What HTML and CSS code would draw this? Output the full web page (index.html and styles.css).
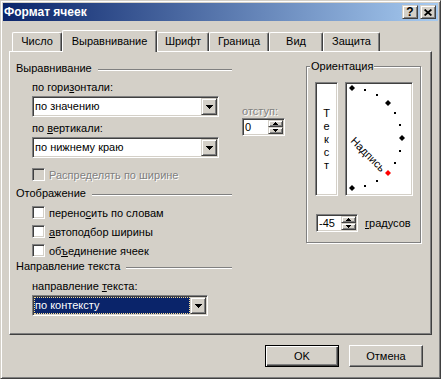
FILE: index.html
```html
<!DOCTYPE html>
<html lang="ru">
<head>
    <meta charset="UTF-8">
    <title>Формат ячеек</title>
    <link rel="stylesheet" href="styles.css">
</head>
<body>
    <div class="window">
        <div class="titlebar">
            <span class="title">Формат ячеек</span>
            <div class="caption-buttons">
                <span class="cap-btn">?</span>
                <span class="cap-btn">
                    <svg width="8" height="7" viewBox="0 0 8 7"><path d="M0.6 0.5L7.4 6.5M7.4 0.5L0.6 6.5" stroke="#000" stroke-width="1.7"/></svg>
                </span>
            </div>
        </div>

        <!-- Tabs -->
        <div class="tabs">
            <div class="tab tab-number">Число</div>
            <div class="tab tab-align active">Выравнивание</div>
            <div class="tab tab-font">Шрифт</div>
            <div class="tab tab-border">Граница</div>
            <div class="tab tab-view">Вид</div>
            <div class="tab tab-protect">Защита</div>
        </div>

        <div class="panel">
            <!-- Left column -->
            <div class="col-main">
                <div class="group-head">
                    <span>Выравнивание</span><span class="rule"></span>
                </div>
                <div class="indent">
                    <div class="field-label first">по гори<u>з</u>онтали:</div>
                    <div class="combo">
                        <span class="combo-value">по значению</span>
                        <span class="drop-btn"><svg width="7" height="4" viewBox="0 0 7 4"><path d="M0 0h7v1h-1v1h-1v1h-1v1h-1v-1h-1v-1h-1v-1h-1z"/></svg></span>
                    </div>
                    <div class="field-label">по <u>в</u>ертикали:</div>
                    <div class="combo">
                        <span class="combo-value">по нижнему краю</span>
                        <span class="drop-btn"><svg width="7" height="4" viewBox="0 0 7 4"><path d="M0 0h7v1h-1v1h-1v1h-1v1h-1v-1h-1v-1h-1v-1h-1z"/></svg></span>
                    </div>
                    <div class="check-row spread disabled">
                        <span class="check off"></span>
                        <span>Распределять по ширине</span>
                    </div>
                </div>

                <div class="group-head display-head">
                    <span>Отображение</span><span class="rule"></span>
                </div>
                <div class="indent">
                    <div class="check-row">
                        <span class="check"></span>
                        <span>перено<u>с</u>ить по словам</span>
                    </div>
                    <div class="check-row">
                        <span class="check"></span>
                        <span><u>а</u>втоподбор ширины</span>
                    </div>
                    <div class="check-row">
                        <span class="check"></span>
                        <span>об<u>ъ</u>единение ячеек</span>
                    </div>
                </div>

                <div class="group-head direction-head">
                    <span>Направление текста</span><span class="rule"></span>
                </div>
                <div class="indent">
                    <div class="field-label direction-label">направление <u>т</u>екста:</div>
                    <div class="combo short">
                        <span class="combo-value selected">по контексту</span>
                        <span class="drop-btn"><svg width="7" height="4" viewBox="0 0 7 4"><path d="M0 0h7v1h-1v1h-1v1h-1v1h-1v-1h-1v-1h-1v-1h-1z"/></svg></span>
                    </div>
                </div>
            </div>

            <!-- Indent -->
            <div class="col-indent">
                <div class="field-label disabled">отступ:</div>
                <div class="spin">
                    <span class="spin-value">0</span>
                    <span class="spin-btns">
                        <span class="spin-btn"><svg width="5" height="3" viewBox="0 0 5 3"><path d="M2 0h1v1h1v1h1v1h-5v-1h1v-1h1z"/></svg></span>
                        <span class="spin-btn"><svg width="5" height="3" viewBox="0 0 5 3"><path d="M0 0h5v1h-1v1h-1v1h-1v-1h-1v-1h-1z"/></svg></span>
                    </span>
                </div>
            </div>

            <!-- Orientation -->
            <div class="orientation">
                <span class="orientation-title">Ориентация</span>
                <div class="orient-row">
                    <div class="text-box">
                        <span>Т</span><span>е</span><span>к</span><span>с</span><span>т</span>
                    </div>
                    <div class="dial">
                        <svg width="64" height="110" viewBox="0 0 64 110">
                            <g fill="#000">
                                <polygon points="5,1 8,4 5,7 2,4"/>
                                <polygon points="41,16 44,19 41,22 38,19"/>
                                <polygon points="55,51 58,54 55,57 52,54"/>
                                <polygon points="5,101 8,104 5,107 2,104"/>
                                <rect x="17" y="5" width="2" height="2"/>
                                <rect x="29" y="10" width="2" height="2"/>
                                <rect x="47" y="28" width="2" height="2"/>
                                <rect x="52" y="40" width="2" height="2"/>
                                <rect x="52" y="66" width="2" height="2"/>
                                <rect x="47" y="78" width="2" height="2"/>
                                <rect x="29" y="96" width="2" height="2"/>
                                <rect x="17" y="101" width="2" height="2"/>
                            </g>
                            <polygon points="41,86 44,89 41,92 38,89" fill="#ff0000"/>
                            <text x="6" y="58" transform="rotate(45 5 54)" font-size="11">Надпись</text>
                        </svg>
                    </div>
                </div>
                <div class="degrees">
                    <div class="spin wide">
                        <span class="spin-value">-45</span>
                        <span class="spin-btns">
                            <span class="spin-btn"><svg width="5" height="3" viewBox="0 0 5 3"><path d="M2 0h1v1h1v1h1v1h-5v-1h1v-1h1z"/></svg></span>
                            <span class="spin-btn"><svg width="5" height="3" viewBox="0 0 5 3"><path d="M0 0h5v1h-1v1h-1v1h-1v-1h-1v-1h-1z"/></svg></span>
                        </span>
                    </div>
                    <span><u>г</u>радусов</span>
                </div>
            </div>
        </div>

        <div class="buttons">
            <button class="btn default">OK</button>
            <button class="btn">Отмена</button>
        </div>
    </div>
</body>
</html>
```

FILE: styles.css
```css
* {
    box-sizing: border-box;
}

body {
    margin: 0;
    background: #d4d0c8;
    font-family: 'Liberation Sans', Arial, sans-serif;
    font-size: 11px;
    color: #000;
}

u {
    text-underline-offset: 1px;
}

.window {
    width: 441px;
    height: 379px;
    padding: 2px;
    border: 1px solid;
    border-color: #d4d0c8 #404040 #404040 #d4d0c8;
    box-shadow: inset 1px 1px #fff, inset -1px -1px #808080;
}

/* Title bar */
.titlebar {
    height: 18px;
    display: flex;
    align-items: center;
    justify-content: space-between;
    padding: 0 2px 0 1px;
    background: linear-gradient(to right, #0a246a, #a6caf0);
}

.title {
    color: #fff;
    font-weight: bold;
    font-size: 12px;
}

.caption-buttons {
    display: flex;
    gap: 2px;
}

.cap-btn {
    width: 16px;
    height: 14px;
    display: flex;
    align-items: center;
    justify-content: center;
    background: #d4d0c8;
    border: 1px solid;
    border-color: #d4d0c8 #404040 #404040 #d4d0c8;
    box-shadow: inset 1px 1px #fff, inset -1px -1px #808080;
    font-weight: bold;
    font-size: 12px;
    line-height: 1;
}

.cap-btn svg {
    display: block;
}

/* Tabs */
.tabs {
    display: flex;
    align-items: flex-end;
    height: 21px;
    margin-top: 9px;
    padding-left: 9px;
}

.tab {
    height: 19px;
    line-height: 17px;
    text-align: center;
    border-top: 1px solid #fff;
    border-left: 1px solid #fff;
    border-right: 1px solid #404040;
    border-radius: 2px 2px 0 0;
    box-shadow: inset -1px 0 #808080;
}

.tab.active {
    height: 22px;
    line-height: 20px;
    margin-bottom: -1px;
    position: relative;
    z-index: 1;
    background: #d4d0c8;
}

.tab-number { width: 50px; }
.tab-align { width: 95px; }
.tab-font { width: 52px; }
.tab-border { width: 60px; }
.tab-view { width: 54px; }
.tab-protect { width: 57px; }

/* Panel */
.panel {
    display: flex;
    width: 423px;
    height: 284px;
    margin-left: 6px;
    padding: 10px 0 0 6px;
    border: 1px solid;
    border-color: #fff #404040 #404040 #fff;
    box-shadow: inset -1px -1px #808080;
}

.col-main {
    width: 216px;
}

.group-head {
    display: flex;
    align-items: center;
    gap: 6px;
    height: 13px;
    line-height: 13px;
}

.group-head .rule {
    flex: 1;
    height: 2px;
    margin-top: 2px;
    border-top: 1px solid #808080;
    border-bottom: 1px solid #fff;
}

.display-head { margin-top: 6px; }
.direction-head { margin-top: 3px; }

.indent {
    padding-left: 16px;
}

.field-label {
    height: 13px;
    line-height: 13px;
    margin-top: 5px;
}

.field-label.first { margin-top: 6px; }
.field-label.direction-label { margin-top: 7px; }

.disabled {
    color: #808080;
    text-shadow: 1px 1px 0 #fff;
}

/* Sunken fields */
.combo,
.spin,
.check,
.text-box,
.dial {
    background: #fff;
    border: 1px solid;
    border-color: #808080 #fff #fff #808080;
    box-shadow: inset 1px 1px #404040, inset -1px -1px #d4d0c8;
}

.combo {
    display: flex;
    width: 187px;
    height: 21px;
    margin-top: 2px;
    padding: 1px;
}

.combo.short {
    width: 176px;
}

.combo-value {
    flex: 1;
    padding-left: 1px;
    line-height: 17px;
    white-space: nowrap;
}

.combo-value.selected {
    background: #0a246a;
    color: #fff;
    outline: 1px dotted #f5db95;
    outline-offset: -1px;
}

.drop-btn,
.spin-btn {
    display: flex;
    align-items: center;
    justify-content: center;
    background: #d4d0c8;
    border: 1px solid;
    border-color: #d4d0c8 #404040 #404040 #d4d0c8;
    box-shadow: inset 1px 1px #fff, inset -1px -1px #808080;
}

.drop-btn {
    width: 16px;
    height: 17px;
}

.drop-btn svg,
.spin-btn svg {
    display: block;
}

.check-row {
    display: flex;
    align-items: center;
    gap: 4px;
    height: 13px;
    margin-top: 6px;
}

.check-row.spread {
    margin-top: 10px;
}

.check {
    width: 13px;
    height: 13px;
}

.check.off {
    background: #d4d0c8;
}

/* Indent column */
.col-indent {
    width: 43px;
    margin-left: 10px;
    padding-top: 38px;
}

.spin {
    display: flex;
    width: 43px;
    height: 18px;
    padding: 1px;
    text-shadow: none;
    color: #000;
}

.spin.wide {
    width: 42px;
}

.spin-value {
    flex: 1;
    padding-left: 1px;
    line-height: 14px;
}

.spin-btns {
    display: flex;
    flex-direction: column;
    width: 15px;
}

.spin-btn {
    height: 7px;
}

/* Orientation */
.orientation {
    position: relative;
    width: 115px;
    height: 177px;
    margin: 4px 0 0 21px;
    padding: 15px 0 0 8px;
    border: 1px solid #808080;
    box-shadow: inset 1px 1px #fff, 1px 1px #fff;
}

.orientation-title {
    position: absolute;
    top: -7px;
    left: 3px;
    padding: 0 1px;
    line-height: 13px;
    background: #d4d0c8;
}

.orient-row {
    display: flex;
    gap: 7px;
}

.text-box {
    width: 23px;
    height: 114px;
    display: flex;
    flex-direction: column;
    align-items: center;
    justify-content: center;
}

.text-box span {
    line-height: 13px;
}

.dial {
    width: 68px;
    height: 114px;
    padding: 1px;
}

.dial svg {
    display: block;
}

.degrees {
    display: flex;
    align-items: center;
    gap: 7px;
    margin: 18px 0 0 1px;
}

/* Dialog buttons */
.buttons {
    display: flex;
    justify-content: flex-end;
    gap: 10px;
    margin-top: 10px;
    padding-right: 15px;
}

.btn {
    width: 74px;
    height: 22px;
    padding: 0;
    font: inherit;
    color: #000;
    background: #d4d0c8;
    border: 1px solid;
    border-color: #fff #404040 #404040 #fff;
    box-shadow: inset -1px -1px #808080;
}

.btn.default {
    border-color: #000;
    box-shadow: inset 1px 1px #fff, inset -1px -1px #404040, inset -2px -2px #808080;
}
```
